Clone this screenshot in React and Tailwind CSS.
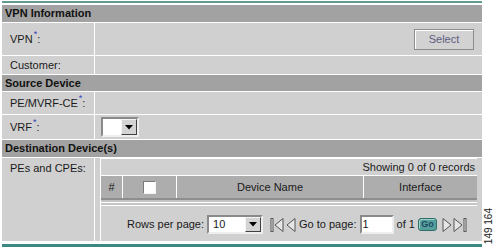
import React from "react";

function Req() {
  return (
    <span className="relative -top-[5px] text-[9px] text-[#2f3fb8] ml-px">*</span>
  );
}

function DropBtn() {
  return (
    <div className="w-[16px] h-full bg-[#d4d4d4] border border-t-[#f4f4f4] border-l-[#f4f4f4] border-b-[#404040] border-r-[#404040] flex items-center justify-center">
      <svg width="8" height="5" viewBox="0 0 8 5">
        <path d="M0 0 L8 0 L4 4.5 Z" fill="#000" />
      </svg>
    </div>
  );
}

function FirstIcon() {
  return (
    <svg width="14" height="16" viewBox="0 0 14 16">
      <rect x="1" y="1.5" width="2" height="13" fill="#eaeaea" stroke="#555" strokeWidth="1" />
      <path d="M13 1.5 L5 8 L13 14.5 Z" fill="#e6e6e6" stroke="#555" strokeWidth="1" strokeLinejoin="round" />
    </svg>
  );
}
function PrevIcon() {
  return (
    <svg width="10" height="16" viewBox="0 0 10 16">
      <path d="M9 1.5 L1 8 L9 14.5 Z" fill="#e6e6e6" stroke="#555" strokeWidth="1" strokeLinejoin="round" />
    </svg>
  );
}
function NextIcon() {
  return (
    <svg width="10" height="16" viewBox="0 0 10 16">
      <path d="M1 1.5 L9 8 L1 14.5 Z" fill="#e6e6e6" stroke="#555" strokeWidth="1" strokeLinejoin="round" />
    </svg>
  );
}
function LastIcon() {
  return (
    <svg width="15" height="16" viewBox="0 0 15 16">
      <path d="M1 1.5 L9 8 L1 14.5 Z" fill="#e6e6e6" stroke="#555" strokeWidth="1" strokeLinejoin="round" />
      <rect x="11" y="1.5" width="2" height="13" fill="#eaeaea" stroke="#555" strokeWidth="1" />
    </svg>
  );
}

export default function App() {
  return (
    <div
      className="relative w-[495px] h-[247px] bg-white overflow-hidden text-[11px] text-[#1a1a1a] leading-[13px]"
      style={{ fontFamily: '"Liberation Sans", Arial, sans-serif' }}
    >
      <div className="ml-[2px] w-[480px] pt-px">
        <div className="h-[2px] bg-[#5f9a93]" />
        <div className="mt-[2px] flex flex-col gap-px bg-white">
          <div className="h-[17px] bg-[#a2a2a2] font-bold pl-[3px] flex items-center text-[#111]">
            VPN Information
          </div>
          <div className="flex gap-px h-[32px]">
            <div className="w-[92px] bg-[#d0d0d0] pl-[8px] flex items-center">
              VPN<Req />:
            </div>
            <div className="flex-1 bg-[#d0d0d0] flex items-center justify-end pr-[8px]">
              <div className="w-[60px] h-[21px] bg-[#d2d2d2] border border-[#8c8c8c] shadow-[inset_1px_1px_0_#ffffff] flex items-center justify-center text-[#5d5d80]">
                Select
              </div>
            </div>
          </div>
          <div className="flex gap-px h-[18px]">
            <div className="w-[92px] bg-[#d0d0d0] pl-[8px] flex items-center">Customer:</div>
            <div className="flex-1 bg-[#d0d0d0]" />
          </div>
          <div className="h-[16px] bg-[#a2a2a2] font-bold pl-[3px] flex items-center text-[#111]">
            Source Device
          </div>
          <div className="flex gap-px h-[22px]">
            <div className="w-[92px] bg-[#d0d0d0] pl-[8px] flex items-center">
              PE/MVRF-CE<Req />:
            </div>
            <div className="flex-1 bg-[#d0d0d0]" />
          </div>
          <div className="flex gap-px h-[24px]">
            <div className="w-[92px] bg-[#d0d0d0] pl-[8px] flex items-center">
              VRF<Req />:
            </div>
            <div className="flex-1 bg-[#d0d0d0] flex items-center pl-[6px]">
              <div className="flex w-[38px] h-[20px] bg-white border-2 border-t-[#8a8a8a] border-l-[#8a8a8a] border-b-[#eeeeee] border-r-[#eeeeee]">
                <div className="flex-1" />
                <DropBtn />
              </div>
            </div>
          </div>
          <div className="h-[17px] bg-[#a2a2a2] font-bold pl-[3px] flex items-center text-[#111]">
            Destination Device(s)
          </div>
          <div className="flex gap-px h-[83px]">
            <div className="w-[92px] bg-[#d0d0d0] pl-[8px] pt-[4px]">PEs and CPEs:</div>
            <div className="flex-1 bg-[#d0d0d0] px-[5px]">
              <div className="h-full border-l border-white flex flex-col">
                <div className="h-[17px] flex items-center justify-end pr-[2px] border-t border-white">
                  Showing 0 of 0 records
                </div>
                <div className="h-px bg-white" />
                <div className="flex gap-px bg-white h-[22px]">
                  <div className="w-[21px] bg-[#adadad] flex items-center justify-center">#</div>
                  <div className="w-[53px] bg-[#adadad] flex items-center justify-center">
                    <div className="w-[13px] h-[13px] bg-white border border-t-[#7a7a7a] border-l-[#7a7a7a] border-b-[#f4f4f4] border-r-[#f4f4f4]" />
                  </div>
                  <div className="w-[186px] bg-[#adadad] flex items-center justify-center">Device Name</div>
                  <div className="flex-1 bg-[#adadad] flex items-center justify-center">Interface</div>
                </div>
                <div className="h-[2px] bg-[#8e8e8e]" />
                <div className="h-[2px] bg-[#c4c4c4]" />
                <div className="h-px bg-white" />
                <div className="h-[2px] bg-[#c4c4c4]" />
                <div className="h-px bg-white" />
                <div className="flex-1 flex items-center pl-[26px] pt-[2px]">
                  <span>Rows per page:</span>
                  <div className="ml-[3px] flex w-[56px] h-[19px] bg-white border-2 border-t-[#8a8a8a] border-l-[#8a8a8a] border-b-[#eeeeee] border-r-[#eeeeee]">
                    <div className="flex-1 flex items-center pl-[4px]">10</div>
                    <DropBtn />
                  </div>
                  <div className="ml-[7px] flex items-center"><FirstIcon /></div>
                  <div className="ml-[2px] flex items-center"><PrevIcon /></div>
                  <span className="ml-[3px]">Go to page:</span>
                  <div className="ml-[3px] w-[34px] h-[19px] bg-white border-2 border-t-[#8a8a8a] border-l-[#8a8a8a] border-b-[#eeeeee] border-r-[#eeeeee] flex items-center pl-[1px]">
                    1
                  </div>
                  <span className="ml-[3px]">of 1</span>
                  <div className="ml-[3px] w-[19px] h-[13px] rounded-[3px] bg-[#56a09c] border border-[#2e6f6c] shadow-[inset_1px_1px_0_#9fd0cc] flex items-center justify-center text-[9px] leading-[9px] font-bold text-[#1d4a66]">
                    Go
                  </div>
                  <div className="ml-[5px] flex items-center"><NextIcon /></div>
                  <div className="ml-[1px] flex items-center"><LastIcon /></div>
                </div>
              </div>
            </div>
          </div>
        </div>
        <div className="mt-[3px] h-[3px] bg-[#3c8983]" />
      </div>
      <div className="absolute left-[483px] top-[208px] whitespace-nowrap [writing-mode:vertical-rl] rotate-180 text-[10px] leading-[11px] text-[#222]">
        149 164
      </div>
    </div>
  );
}
